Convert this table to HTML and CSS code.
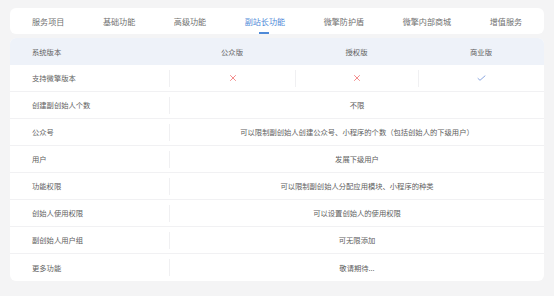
FILE: index.html
```html
<!DOCTYPE html>
<html lang="zh-CN">
<head>
<meta charset="utf-8">
<title>副站长功能</title>
<link rel="stylesheet" href="styles.css">
</head>
<body>
<div class="page">
  <nav class="tabs">
    <div class="tab">服务项目</div>
    <div class="tab">基础功能</div>
    <div class="tab">高级功能</div>
    <div class="tab active">副站长功能</div>
    <div class="tab">微擎防护盾</div>
    <div class="tab">微擎内部商城</div>
    <div class="tab">增值服务</div>
  </nav>
  <section class="table">
    <div class="row head">
      <div class="label">系统版本</div>
      <div class="hcell">公众版</div>
      <div class="hcell">授权版</div>
      <div class="hcell">商业版</div>
    </div>
    <div class="row">
      <div class="label">支持微擎版本</div>
      <div class="cell"><svg class="no" width="8" height="8" viewBox="0 0 8 8"><path d="M1.2 1.2L6.8 6.8M6.8 1.2L1.2 6.8"/></svg></div>
      <div class="cell"><svg class="no" width="8" height="8" viewBox="0 0 8 8"><path d="M1.2 1.2L6.8 6.8M6.8 1.2L1.2 6.8"/></svg></div>
      <div class="cell"><svg class="yes" width="9" height="6" viewBox="0 0 9 6"><path d="M0.7 3.2L3 5.3L8.3 0.6"/></svg></div>
    </div>
    <div class="row">
      <div class="label">创建副创始人个数</div>
      <div class="cell span">不限</div>
    </div>
    <div class="row">
      <div class="label">公众号</div>
      <div class="cell span">可以限制副创始人创建公众号、小程序的个数（包括创始人的下级用户）</div>
    </div>
    <div class="row">
      <div class="label">用户</div>
      <div class="cell span">发展下级用户</div>
    </div>
    <div class="row">
      <div class="label">功能权限</div>
      <div class="cell span">可以限制副创始人分配应用模块、小程序的种类</div>
    </div>
    <div class="row">
      <div class="label">创始人使用权限</div>
      <div class="cell span">可以设置创始人的使用权限</div>
    </div>
    <div class="row">
      <div class="label">副创始人用户组</div>
      <div class="cell span">可无限添加</div>
    </div>
    <div class="row">
      <div class="label">更多功能</div>
      <div class="cell span">敬请期待...</div>
    </div>
  </section>
</div>
</body>
</html>
```

FILE: styles.css
```css
html, body {
  margin: 0;
  padding: 0;
  background: #f4f4f5;
  font-family: "Noto Sans CJK SC", "Noto Sans", sans-serif;
}

.page {
  padding: 8px 10px 0 10px;
}

.tabs {
  display: flex;
  gap: 38.5px;
  height: 26px;
  padding-left: 22px;
  background: #ffffff;
  border-radius: 6px;
}

.tab {
  position: relative;
  display: flex;
  align-items: center;
  font-size: 8.1px;
  color: #707070;
  white-space: nowrap;
}

.tab.active {
  color: #4f8ad8;
}

.tab.active::after {
  content: "";
  position: absolute;
  left: 50%;
  bottom: 0;
  width: 10px;
  height: 2px;
  margin-left: -6px;
  background: #4f8ad8;
}

.table {
  margin-top: 4px;
  background: #ffffff;
  border-radius: 6px;
  overflow: hidden;
}

.row {
  display: grid;
  grid-template-columns: 159px 126px 123px 1fr;
  align-items: center;
  height: 27px;
  box-sizing: border-box;
  border-bottom: 1px solid #f1f1f3;
  font-size: 7.3px;
  color: #606060;
}

.row:last-child {
  border-bottom: none;
}

.row.head {
  background: #eef2f9;
  border-bottom: none;
}

.label {
  padding-left: 22px;
  white-space: nowrap;
}

.hcell {
  text-align: center;
}

.cell {
  height: 17px;
  border-left: 1px solid #f0f0f2;
  display: flex;
  align-items: center;
  justify-content: center;
  white-space: nowrap;
}

.cell.span {
  grid-column: span 3;
}

.no path {
  fill: none;
  stroke: #f38c8c;
  stroke-width: 1;
}

.yes path {
  fill: none;
  stroke: #8aa6df;
  stroke-width: 1;
}
```
